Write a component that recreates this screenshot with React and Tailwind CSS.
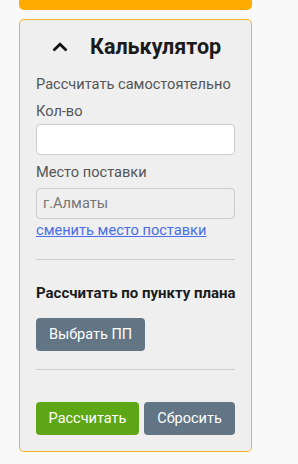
export default function App() {
  return (
    <div className="min-h-screen w-[298px] h-[464px] bg-[#f9f9f9] pl-[19px] pr-[46px] font-['Roboto',sans-serif]">
      <div className="h-[10px] bg-[#ffab00] rounded-b-[5px]" />
      <div className="mt-[9px] h-[433px] rounded-[5px] bg-[#f9b526] p-[1px]">
        <div className="h-full rounded-[4px] bg-[#efefef] px-[16px]">
          <div className="flex items-center gap-[22px] pl-[16px] h-[54px]">
            <svg width="16" height="10" viewBox="0 0 16 10" className="mb-[1px]">
              <path d="M1.5 8.5 L8 2.2 L14.5 8.5" fill="none" stroke="#111" strokeWidth="2.7" />
            </svg>
            <span className="text-[21.5px] font-bold text-[#1b1b1b] leading-none">Калькулятор</span>
          </div>
          <div className="text-[14.6px] text-[#555] leading-[20px]">Рассчитать самостоятельно</div>
          <div className="mt-[7px] text-[14.6px] text-[#555] leading-[20px]">Кол-во</div>
          <div className="mt-[3px] h-[31px] rounded-[4px] border border-[#cccccc] bg-white" />
          <div className="mt-[7px] text-[14.6px] text-[#555] leading-[20px]">Место поставки</div>
          <div className="mt-[6px] h-[31px] rounded-[4px] border border-[#cccccc] bg-[#efefef] flex items-center pl-[6px] text-[14.6px] text-[#777]">
            г.Алматы
          </div>
          <a href="#" className="block mt-[1px] text-[14.6px] text-[#4a6ee8] underline leading-[20px]">сменить место поставки</a>
          <div className="mt-[19px] h-[1px] border-t border-[#cccccc]" />
          <div className="mt-[23px] whitespace-nowrap text-[15px] font-bold text-[#1b1b1b] leading-[20px]">Рассчитать по пункту плана</div>
          <button className="mt-[15px] h-[33px] w-[109px] rounded-[4px] bg-[#627584] text-white text-[14.5px]">Выбрать ПП</button>
          <div className="mt-[18px] h-[1px] border-t border-[#cccccc]" />
          <div className="mt-[32px] flex gap-[5px]">
            <button className="h-[33px] w-[103px] rounded-[4px] bg-[#5da615] text-white text-[14.5px]">Рассчитать</button>
            <button className="h-[33px] w-[91px] rounded-[4px] bg-[#627584] text-white text-[14.5px]">Сбросить</button>
          </div>
        </div>
      </div>
    </div>
  );
}
